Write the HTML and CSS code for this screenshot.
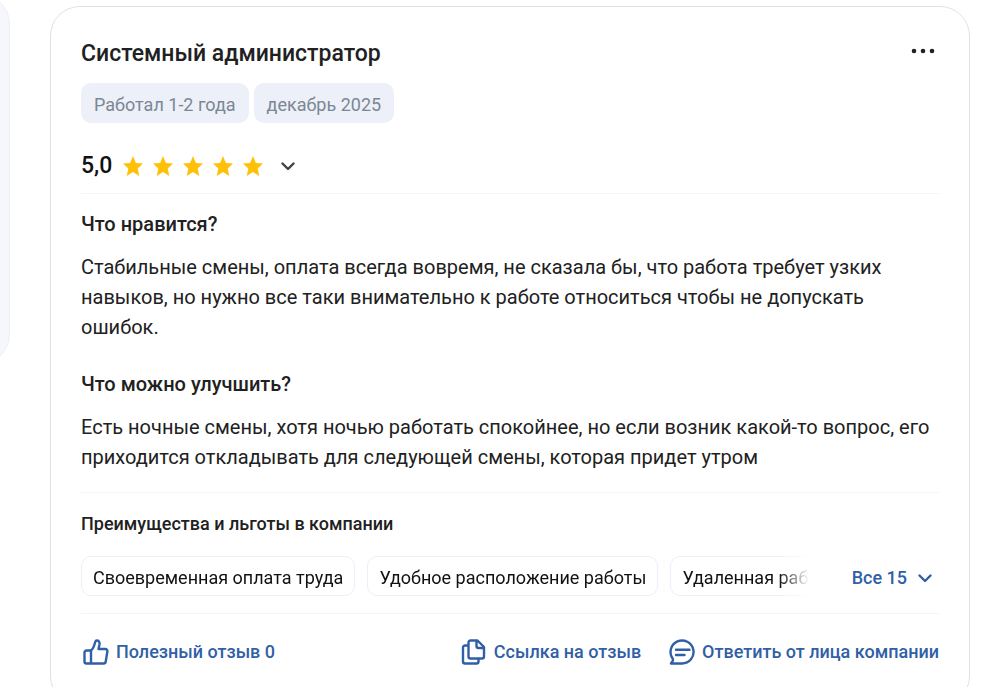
FILE: index.html
```html
<!DOCTYPE html>
<html lang="ru">
<head>
  <meta charset="UTF-8">
  <meta name="viewport" content="width=device-width, initial-scale=1.0">
  <title>Отзыв: Системный администратор</title>
  <link rel="stylesheet" href="styles.css">
</head>
<body>
  <!-- Shared star shape -->
  <svg class="sprite" aria-hidden="true">
    <symbol id="star" viewBox="0 0 20 20">
      <path d="M10 0l2.900 6.900 7.100.6-5.300 4.900 1.600 7.600-6.300-4-6.300 4 1.600-7.600L0 7.500l7.100-.6z"/>
    </symbol>
  </svg>

  <div class="page">
    <aside class="side-panel"></aside>

    <article class="review">
      <!-- Header -->
      <header class="review-header">
        <h2 class="review-title">Системный администратор</h2>
        <button class="more" type="button" aria-label="Меню">
          <svg width="24" height="6" viewBox="0 0 24 6"><circle cx="3" cy="3" r="2.300"/><circle cx="12" cy="3" r="2.300"/><circle cx="21" cy="3" r="2.300"/></svg>
        </button>
      </header>
      <div class="tags">
        <span class="tag">Работал 1-2 года</span>
        <span class="tag">декабрь 2025</span>
      </div>

      <!-- Rating -->
      <div class="rating">
        <span class="rating-value">5,0</span>
        <div class="stars">
          <svg><use href="#star"/></svg>
          <svg><use href="#star"/></svg>
          <svg><use href="#star"/></svg>
          <svg><use href="#star"/></svg>
          <svg><use href="#star"/></svg>
        </div>
        <button class="rating-toggle" type="button" aria-label="Подробнее">
          <svg class="chevron" viewBox="0 0 14 10"><path d="M1.500 2.500L7 8l5.500-5.500"/></svg>
        </button>
      </div>

      <!-- Text -->
      <section class="review-text">
        <h3>Что нравится?</h3>
        <p>Стабильные смены, оплата всегда вовремя, не сказала бы, что работа требует узких навыков, но нужно все таки внимательно к работе относиться чтобы не допускать ошибок.</p>
        <h3>Что можно улучшить?</h3>
        <p>Есть ночные смены, хотя ночью работать спокойнее, но если возник какой-то вопрос, его приходится откладывать для следующей смены, которая придет утром</p>
      </section>

      <!-- Benefits -->
      <section class="benefits">
        <h4>Преимущества и льготы в компании</h4>
        <div class="benefits-row">
          <div class="benefits-list">
            <span class="benefit">Своевременная оплата труда</span>
            <span class="benefit">Удобное расположение работы</span>
            <span class="benefit">Удаленная работа</span>
          </div>
          <button class="show-all" type="button">Все 15
            <svg class="chevron" viewBox="0 0 14 10"><path d="M1.500 2.500L7 8l5.500-5.500"/></svg>
          </button>
        </div>
      </section>

      <!-- Actions -->
      <footer class="actions">
        <button class="action action-like" type="button">
          <svg viewBox="0 0 26 26"><path d="M8 11.500H3.500a2 2 0 0 0-2 2v9a2 2 0 0 0 2 2h17.200a2 2 0 0 0 2-1.700l1.700-10.500a2 2 0 0 0-2-2.300H15.500l1-4.500c.4-2.200-.6-3.800-2.300-4-1-.1-1.700.5-2 1.500C11.500 6 10.500 9.500 8 11.500zM8 11.500v13"/></svg>
          Полезный отзыв 0
        </button>
        <button class="action" type="button">
          <svg viewBox="0 0 26 26"><path d="M9.500 1.500h7l6.500 6.500v9.500a2 2 0 0 1-2 2H9.500a2 2 0 0 1-2-2v-14a2 2 0 0 1 2-2zM15.500 2v5a2 2 0 0 0 2 2h5M7 6.500H4a2 2 0 0 0-2 2v14a2 2 0 0 0 2 2h11.500a2 2 0 0 0 2-2v-3"/></svg>
          Ссылка на отзыв
        </button>
        <button class="action" type="button">
          <svg viewBox="0 0 26 26"><path d="M2 24.500h11a11.500 11.500 0 1 0-9.300-4.800c.5.700.4 1.400 0 2.100zM7 10.800h13.500M7 16h8.500"/></svg>
          Ответить от лица компании
        </button>
      </footer>
    </article>
  </div>
</body>
</html>
```
FILE: styles.css
```css
* {
  margin: 0;
  padding: 0;
  box-sizing: border-box;
}

body {
  font-family: Roboto, 'Liberation Sans', sans-serif;
  color: #212121;
  background-color: #fff;
  overflow: hidden;
}

button {
  font-family: inherit;
  background: none;
  border: none;
  cursor: pointer;
}

.sprite {
  display: none;
}

.page {
  display: flex;
  align-items: flex-start;
  gap: 40px;
  padding-right: 28px;
}

/* The side column is mostly scrolled out to the left */
.side-panel {
  flex: 0 0 300px;
  min-height: 370px;
  margin-top: -6px;
  margin-left: -290px;
  background-color: #f5f7fd;
  border-right: 1px solid #eceef3;
  border-radius: 30px;
}

.review {
  flex: 1;
  min-width: 0;
  margin-top: 6px;
  padding: 30px 30px 38px;
  border: 1px solid #dce3eb;
  border-radius: 30px;
}

.review-header {
  display: flex;
  justify-content: space-between;
  align-items: flex-start;
  margin-bottom: 12px;
}

.review-title {
  font-size: 23px;
  font-weight: 500;
  line-height: 34px;
}

.more {
  height: 28px;
  padding: 0 4px;
  fill: #212121;
}

.more svg {
  display: block;
}

.tags {
  display: flex;
  gap: 5px;
}

.tag {
  height: 40px;
  padding: 0 13px;
  font-size: 18px;
  line-height: 43px;
  color: #7b8794;
  background-color: #edf0f8;
  border-radius: 10px;
}

.rating {
  display: flex;
  align-items: center;
  margin-top: 27px;
  padding-bottom: 11px;
  border-bottom: 1px solid #f3f4f7;
}

.rating-value {
  font-size: 23px;
  font-weight: 500;
  line-height: 32px;
  color: #111;
}

.stars {
  display: flex;
  gap: 10px;
  margin-left: 11px;
}

.stars svg {
  width: 20px;
  height: 20px;
  fill: #ffc107;
}

.rating-toggle {
  display: flex;
  padding: 4px;
  margin-left: 14px;
  color: #424242;
}

.chevron {
  width: 14px;
  height: 10px;
  fill: none;
  stroke: currentColor;
  stroke-width: 2.4;
  stroke-linecap: round;
  stroke-linejoin: round;
}

.review-text {
  padding: 15px 0 20px;
  border-bottom: 1px solid #f3f4f7;
}

.review-text h3 {
  font-size: 20px;
  font-weight: 500;
  line-height: 30px;
  margin-bottom: 13px;
}

.review-text p {
  font-size: 20px;
  line-height: 30px;
}

.review-text p + h3 {
  margin-top: 27px;
}

.benefits {
  padding: 16px 0 17px;
  border-bottom: 1px solid #f3f4f7;
}

.benefits h4 {
  font-size: 18px;
  font-weight: 500;
  line-height: 30px;
  margin-bottom: 17px;
}

.benefits-row {
  display: flex;
  align-items: center;
  justify-content: space-between;
  gap: 43px;
}

.benefits-list {
  display: flex;
  flex: 1;
  min-width: 0;
  gap: 12px;
  overflow: hidden;
  mask-image: linear-gradient(to left, transparent, #000 30px);
}

.benefit {
  flex: none;
  height: 40px;
  padding: 0 11px;
  font-size: 18px;
  line-height: 42px;
  color: #111;
  white-space: nowrap;
  border: 1px solid #edeff8;
  border-radius: 10px;
}

.show-all {
  display: flex;
  align-items: center;
  gap: 11px;
  padding-top: 3px;
  padding-right: 7px;
  font-size: 18px;
  font-weight: 500;
  line-height: 30px;
  color: #315fa7;
}

.actions {
  display: flex;
  gap: 28px;
  padding-top: 23px;
  padding-left: 2px;
}

.action {
  display: flex;
  align-items: center;
  gap: 7px;
  font-size: 18px;
  font-weight: 500;
  line-height: 30px;
  color: #315fa7;
  white-space: nowrap;
}

.action svg {
  width: 26px;
  height: 26px;
  fill: none;
  stroke: currentColor;
  stroke-width: 2.4;
  stroke-linecap: round;
  stroke-linejoin: round;
}

.action-like {
  margin-right: auto;
}
```
